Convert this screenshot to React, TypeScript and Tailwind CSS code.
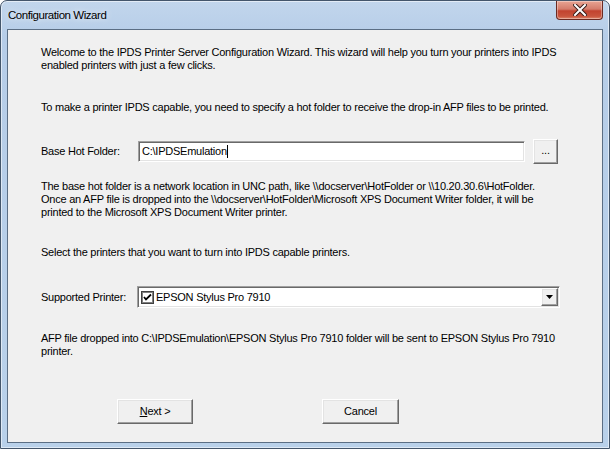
const body = "font-['Liberation_Sans',Arial,sans-serif] text-[11px] leading-[13px] tracking-[-0.24px] text-black";

const L1 = "Welcome to the IPDS Printer Server Configuration Wizard. This wizard will help you turn your printers into IPDS";
const L2 = "enabled printers with just a few clicks.";
const L3 = "To make a printer IPDS capable, you need to specify a hot folder to receive the drop-in AFP files to be printed.";
const L4 = "The base hot folder is a network location in UNC path, like \\\\docserver\\HotFolder or \\\\10.20.30.6\\HotFolder.";
const L5 = "Once an AFP file is dropped into the \\\\docserver\\HotFolder\\Microsoft XPS Document Writer folder, it will be";
const L6 = "printed to the Microsoft XPS Document Writer printer.";
const L7 = "Select the printers that you want to turn into IPDS capable printers.";
const L8 = "AFP file dropped into C:\\IPDSEmulation\\EPSON Stylus Pro 7910 folder will be sent to EPSON Stylus Pro 7910";
const L9 = "printer.";

function Lines({ lines }: { lines: string[] }) {
  return (
    <div className="whitespace-nowrap">
      {lines.map((l) => (
        <div key={l}>{l}</div>
      ))}
    </div>
  );
}

function ClassicButton({ className, children }: { className: string; children: React.ReactNode }) {
  return (
    <div
      className={`flex items-center justify-center bg-[#f0f0f0] border border-t-white border-l-white border-r-[#696969] border-b-[#696969] shadow-[inset_-1px_-1px_0_#a0a0a0,inset_1px_1px_0_#e3e3e3] ${className}`}
    >
      {children}
    </div>
  );
}

function Sunken({ className, children }: { className: string; children?: React.ReactNode }) {
  return (
    <div
      className={`bg-white border border-t-[#a0a0a0] border-l-[#a0a0a0] border-r-white border-b-white shadow-[inset_1px_1px_0_#696969,inset_-1px_-1px_0_#e3e3e3] ${className}`}
    >
      {children}
    </div>
  );
}

export default function App() {
  return (
    <div className="w-[610px] h-[449px] overflow-hidden bg-white">
      <div className="relative w-[610px] h-[449px] flex flex-col rounded-t-[7px] border border-[#44566b] bg-[linear-gradient(180deg,#c2d6ec_0%,#b6cde8_8%,#b9d1ea_100%)] shadow-[inset_0_0_0_1px_rgba(255,255,255,0.55)]">
        {/* title bar */}
        <div className="h-[28px] flex items-center pl-[7px] pt-[2px] font-['Liberation_Sans',Arial,sans-serif] text-[11.5px] tracking-[-0.45px] text-black [text-shadow:0_0_6px_rgba(255,255,255,0.9)]">
          Configuration Wizard
        </div>
        <div className="absolute top-0 right-[6px] w-[47px] h-[19px] rounded-b-[4px] border border-t-0 border-[#6b2a22] bg-[linear-gradient(180deg,#e8a493_0%,#d47c6b_45%,#c2432f_55%,#c9553d_85%,#e0886d_100%)] flex items-center justify-center shadow-[inset_0_0_0_1px_rgba(255,255,255,0.35)]">
          <svg width="14" height="12" viewBox="0 0 14 12">
            <path d="M2 1 L12 11 M12 1 L2 11" stroke="#3a1e1a" strokeWidth="4" strokeLinecap="square" />
            <path d="M2 1 L12 11 M12 1 L2 11" stroke="#ffffff" strokeWidth="2" strokeLinecap="square" />
          </svg>
        </div>

        {/* client area */}
        <div className={`flex-1 mx-[6px] mb-[5px] border border-[#5b6e84] bg-[#f0f0f0] pl-[33px] pt-[16px] ${body}`}>
          <Lines lines={[L1, L2]} />
          <div className="mt-[29px]">
            <Lines lines={[L3]} />
          </div>

          <div className="mt-[25px] flex items-center h-[25px]">
            <div className="w-[97px] whitespace-nowrap">Base Hot Folder:</div>
            <Sunken className="w-[387px] h-[21px] flex items-center pl-[3px]">
              <span>C:\IPDSEmulation</span>
              <span className="w-px h-[13px] bg-black" />
            </Sunken>
            <ClassicButton className="ml-[8px] w-[25px] h-[25px] pb-[2px]">...</ClassicButton>
          </div>

          <div className="mt-[16px]">
            <Lines lines={[L4, L5, L6]} />
          </div>
          <div className="mt-[27px]">
            <Lines lines={[L7]} />
          </div>

          <div className="mt-[27px] flex items-center h-[22px]">
            <div className="w-[96px] whitespace-nowrap">Supported Printer:</div>
            <Sunken className="w-[423px] h-[22px] flex items-center pl-[3px] pr-[1px]">
              <svg width="13" height="13" viewBox="0 0 13 13" className="shrink-0">
                <rect x="0.5" y="0.5" width="12" height="12" fill="#fff" stroke="#404040" />
                <rect x="1.5" y="1.5" width="10" height="10" fill="none" stroke="#808080" />
                <path d="M3 6 L5 8.5 L10 3.5" fill="none" stroke="#000" strokeWidth="1.8" />
              </svg>
              <span className="ml-[2px] flex-1">EPSON Stylus Pro 7910</span>
              <ClassicButton className="w-[17px] h-[18px]">
                <svg width="7" height="4" viewBox="0 0 7 4">
                  <path d="M0 0 H7 L3.5 4 Z" fill="#000" />
                </svg>
              </ClassicButton>
            </Sunken>
          </div>

          <div className="mt-[24px]">
            <Lines lines={[L8, L9]} />
          </div>

          <div className="mt-[41px] flex">
            <ClassicButton className="ml-[76px] w-[76px] h-[25px]">
              <span>
                <span className="underline">N</span>ext &gt;
              </span>
            </ClassicButton>
            <ClassicButton className="ml-[129px] w-[77px] h-[25px]">Cancel</ClassicButton>
          </div>
        </div>
      </div>
    </div>
  );
}
